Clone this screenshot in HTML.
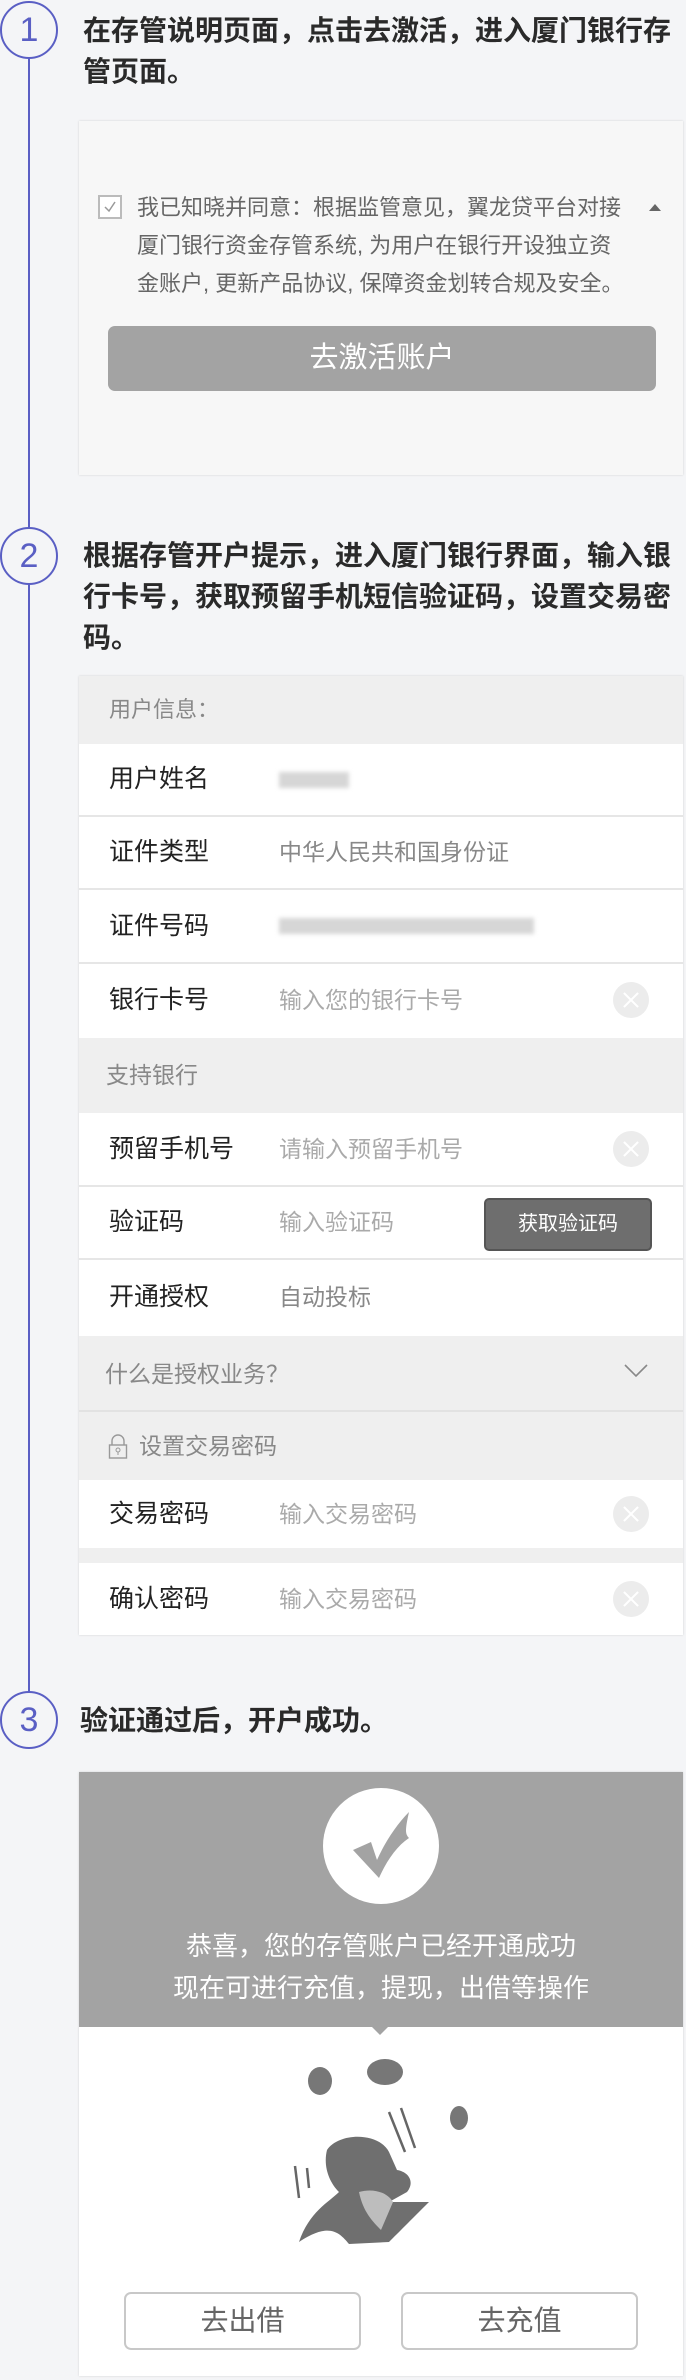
<!DOCTYPE html>
<html><head><meta charset="utf-8">
<style>
*{margin:0;padding:0;box-sizing:border-box}
body{width:686px;height:2380px;background:#f4f5f7;position:relative;overflow:hidden;font-family:"Liberation Sans","Noto Sans CJK SC",sans-serif;}
.abs{position:absolute}
.vline{left:28px;top:58px;width:2px;height:1636px;background:#5a5fc4}
.circ{width:58px;height:58px;border:2px solid #5a5fc4;border-radius:50%;background:#f4f5f7;color:#5a5fc4;font-size:34px;line-height:54px;text-align:center;left:0}
.title{left:83px;width:595px;font-size:28px;color:#2a2a2a;font-weight:bold;line-height:41px}
.card{left:79px;width:604px;box-shadow:0 0 2px rgba(0,0,0,.15)}
.row{position:absolute;left:0;width:604px;background:#fff;border-bottom:2px solid #e6e6e6}
.row .l{position:absolute;left:30px;top:0;font-size:25px;color:#222;}
.row .v{position:absolute;left:200px;top:0;font-size:23px;color:#888;}
.row .ph{color:#aaa}
.gray{position:absolute;left:0;width:604px;background:#efefef;color:#888;font-size:22px}
.clr{position:absolute;left:534px;width:36px;height:36px;border-radius:50%;background:#ececec}
.clr:before,.clr:after{content:"";position:absolute;left:17px;top:8px;width:2px;height:20px;background:#fff;transform:rotate(45deg)}
.clr:after{transform:rotate(-45deg)}
.blur{position:absolute;background:#d6d6d6;filter:blur(2px)}
.btn2{position:absolute;width:237px;height:58px;border:2px solid #c8c8c8;border-radius:7px;background:#fff;color:#666;font-size:28px;text-align:center;line-height:54px}
</style></head><body>
<div class="abs vline"></div>

<div class="abs circ" style="top:1px">1</div>
<div class="abs title" style="top:10px">在存管说明页面，点击去激活，进入厦门银行存管页面。</div>

<div class="abs card" style="top:121px;height:354px;background:#f7f7f7">
  <div class="abs" style="left:19px;top:74px;width:24px;height:24px;border:2px solid #bbb;background:#fff"></div>
  <svg class="abs" style="left:23px;top:78px" width="16" height="16"><path d="M3 8 L7 12 L13 3" stroke="#999" stroke-width="1.5" fill="none"/></svg>
  <div class="abs" style="left:58px;top:68px;width:490px;font-size:22px;line-height:38px;color:#666">我已知晓并同意：根据监管意见，翼龙贷平台对接厦门银行资金存管系统, 为用户在银行开设独立资金账户, 更新产品协议, 保障资金划转合规及安全。</div>
  <div class="abs" style="left:570px;top:83px;width:0;height:0;border-left:6px solid transparent;border-right:6px solid transparent;border-bottom:7px solid #666"></div>
  <div class="abs" style="left:29px;top:205px;width:548px;height:65px;background:#a3a3a3;border-radius:7px;color:#fff;font-size:29px;text-align:center;line-height:65px">去激活账户</div>
</div>

<div class="abs circ" style="top:527px">2</div>
<div class="abs title" style="top:535px">根据存管开户提示，进入厦门银行界面，输入银行卡号，获取预留手机短信验证码，设置交易密码。</div>

<div class="abs card" style="top:676px;height:959px;background:#efefef">
  <div class="gray" style="top:0;height:68px;line-height:68px;padding-left:30px">用户信息：</div>
  <div class="row" style="top:68px;height:73px;line-height:71px"><span class="l">用户姓名</span><div class="blur" style="left:200px;top:28px;width:70px;height:16px"></div></div>
  <div class="row" style="top:141px;height:73px;line-height:71px"><span class="l">证件类型</span><span class="v">中华人民共和国身份证</span></div>
  <div class="row" style="top:214px;height:74px;line-height:72px"><span class="l">证件号码</span><div class="blur" style="left:200px;top:28px;width:255px;height:16px"></div></div>
  <div class="row" style="top:288px;height:74px;line-height:72px;border-bottom:none"><span class="l">银行卡号</span><span class="v ph">输入您的银行卡号</span><div class="clr" style="top:18px"></div></div>
  <div class="gray" style="top:362px;height:75px;line-height:75px;padding-left:27px;font-size:23px">支持银行</div>
  <div class="row" style="top:437px;height:74px;line-height:72px"><span class="l">预留手机号</span><span class="v ph">请输入预留手机号</span><div class="clr" style="top:18px"></div></div>
  <div class="row" style="top:511px;height:73px;line-height:71px"><span class="l">验证码</span><span class="v ph">输入验证码</span>
    <div class="abs" style="left:405px;top:11px;width:168px;height:53px;background:#6e6e6e;border:2px solid #555;border-radius:5px;color:#fff;font-size:20px;text-align:center;line-height:49px">获取验证码</div></div>
  <div class="row" style="top:584px;height:76px;line-height:74px;border-bottom:none"><span class="l">开通授权</span><span class="v">自动投标</span></div>
  <div class="gray" style="top:660px;height:76px;line-height:76px;padding-left:26px;font-size:23px;border-bottom:2px solid #e2e2e2">什么是授权业务？
    <svg class="abs" style="left:545px;top:28px" width="24" height="14"><path d="M1 1 L12 12 L23 1" stroke="#888" stroke-width="1.6" fill="none"/></svg></div>
  <div class="gray" style="top:736px;height:68px;line-height:68px;padding-left:60px;font-size:23px">设置交易密码
    <svg class="abs" style="left:29px;top:22px" width="20" height="26"><path d="M4 11 V7 A6 6 0 0 1 16 7 V11" stroke="#999" stroke-width="1.4" fill="none"/><rect x="1.5" y="11" width="17" height="13" stroke="#999" stroke-width="1.4" fill="none"/><circle cx="10" cy="16" r="2" stroke="#999" fill="none"/><path d="M10 18v3" stroke="#999"/></svg></div>
  <div class="row" style="top:804px;height:68px;line-height:68px;border-bottom:none"><span class="l">交易密码</span><span class="v ph">输入交易密码</span><div class="clr" style="top:16px"></div></div>
  <div class="row" style="top:887px;height:72px;line-height:72px;border-bottom:none"><span class="l">确认密码</span><span class="v ph">输入交易密码</span><div class="clr" style="top:18px"></div></div>
</div>

<div class="abs circ" style="top:1691px">3</div>
<div class="abs title" style="top:1700px;left:80px">验证通过后，开户成功。</div>

<div class="abs card" style="top:1772px;height:604px;background:#fff">
  <div class="abs" style="left:0;top:0;width:604px;height:255px;background:#a3a3a3"></div>
  <div class="abs" style="left:292px;top:254px;width:0;height:0;border-left:9px solid transparent;border-right:9px solid transparent;border-top:9px solid #a3a3a3"></div>
  <div class="abs" style="left:244px;top:16px;width:116px;height:116px;border-radius:50%;background:#fff"></div>
  <svg class="abs" style="left:270px;top:40px" width="66" height="70"><path d="M4 38 L22 30 L28 48 C36 30 48 12 60 0 C56 18 56 22 60 26 C48 34 38 48 30 66 Z" fill="#a3a3a3"/></svg>
  <div class="abs" style="left:0;top:153px;width:604px;text-align:center;color:#fff;font-size:26px;line-height:42px">恭喜，您的存管账户已经开通成功<br>现在可进行充值，提现，出借等操作</div>
  <svg class="abs" style="left:210px;top:280px" width="190" height="200">
    <ellipse cx="31" cy="29" rx="12" ry="14" fill="#777"/><ellipse cx="96" cy="20" rx="18" ry="13" fill="#777"/><ellipse cx="170" cy="66" rx="9" ry="12" fill="#777"/>
    <path d="M100 60 L116 100 M112 56 L126 96 M6 114 L10 146 M18 116 L20 136" stroke="#666" stroke-width="2.5"/>
    <path d="M38 98 C50 80 90 80 100 100 L108 118 C120 120 126 130 118 140 L100 150 L140 150 C120 170 110 180 100 190 L60 192 C50 180 40 170 10 190 C20 160 40 150 50 140 C40 130 34 114 38 98 Z" fill="#6f6f6f"/>
    <path d="M70 140 C84 136 98 140 104 150 L92 178 C84 170 74 160 70 140 Z" fill="#bdbdbd"/>
  </svg>
  <div class="btn2" style="left:45px;top:520px">去出借</div>
  <div class="btn2" style="left:322px;top:520px">去充值</div>
</div>
</body></html>
